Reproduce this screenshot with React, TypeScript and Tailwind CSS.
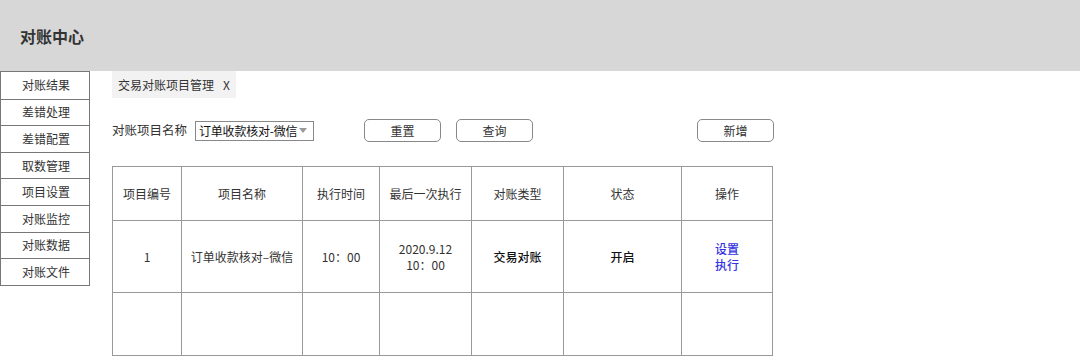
import React from "react";

const font = { fontFamily: '"Noto Sans CJK SC", "Noto Sans", sans-serif' };

const sideItems = ["对账结果", "差错处理", "差错配置", "取数管理", "项目设置", "对账监控", "对账数据", "对账文件"];

const cols = [69, 121, 77, 92, 92, 118, 91];

export default function App() {
  return (
    <div className="w-[1080px] h-[356px] bg-white overflow-hidden text-[#333]" style={font}>
      <div className="h-[71px] bg-[#d7d7d7] flex items-center pl-[20px]">
        <span className="text-[16px] font-bold text-[#333] tracking-[0px]">对账中心</span>
      </div>
      <div className="flex">
        <div className="w-[90px] border border-[#777] self-start">
          {sideItems.map((t, i) => (
            <div
              key={t}
              className={`h-[26.6px] flex items-center pl-[21px] text-[12px] text-[#333] ${i > 0 ? "border-t border-[#777]" : ""}`}
            >
              {t}
            </div>
          ))}
        </div>
        <div className="ml-[22px] flex flex-col">
          <div className="flex">
            <div className="h-[27px] bg-[#f2f2f2] flex items-center pl-[6px] pr-[6px] text-[12px] text-[#333]">
              <span>交易对账项目管理</span>
              <span className="ml-[9px]">X</span>
            </div>
          </div>
          <div className="flex items-center mt-[21px] h-[23px]">
            <span className="text-[12.5px] text-[#333] whitespace-nowrap">对账项目名称</span>
            <div className="ml-[8px] w-[119px] h-[20px] border border-[#888] flex items-center pl-[3px] pr-[6px] justify-between shrink-0">
              <span className="text-[12px] text-[#111] whitespace-nowrap tracking-[-0.2px]">订单收款核对-微信</span>
              <svg width="8" height="5" viewBox="0 0 8 5" className="shrink-0">
                <path d="M0 0 L8 0 L4 5 Z" fill="#999" />
              </svg>
            </div>
            <button className="ml-[50px] w-[77px] h-[23px] border border-[#888] rounded-[5px] text-[12px] text-[#333] flex items-center justify-center">
              重置
            </button>
            <button className="ml-[15px] w-[77px] h-[23px] border border-[#888] rounded-[5px] text-[12px] text-[#333] flex items-center justify-center">
              查询
            </button>
            <button className="ml-[164px] w-[77px] h-[23px] border border-[#888] rounded-[5px] text-[12px] text-[#333] flex items-center justify-center">
              新增
            </button>
          </div>
          <table className="mt-[24px] border-collapse text-[12px] text-[#333]" style={{ width: 661 }}>
            <colgroup>
              {cols.map((w, i) => (
                <col key={i} style={{ width: w }} />
              ))}
            </colgroup>
            <tbody>
              <tr className="h-[54px]">
                {["项目编号", "项目名称", "执行时间", "最后一次执行", "对账类型", "状态", "操作"].map((t) => (
                  <td key={t} className="border border-[#999] text-center align-middle p-0">
                    {t}
                  </td>
                ))}
              </tr>
              <tr className="h-[72px]">
                <td className="border border-[#999] text-center p-0">1</td>
                <td className="border border-[#999] text-center p-0">订单收款核对–微信</td>
                <td className="border border-[#999] text-center p-0">10：00</td>
                <td className="border border-[#999] text-center p-0 leading-[16px]">
                  2020.9.12
                  <br />
                  10：00
                </td>
                <td className="border border-[#999] text-center p-0 font-medium text-[#111]">交易对账</td>
                <td className="border border-[#999] text-center p-0 font-medium text-[#111]">开启</td>
                <td className="border border-[#999] text-center p-0 font-medium text-[#3434e0] leading-[16px]">
                  设置
                  <br />
                  执行
                </td>
              </tr>
              <tr className="h-[63px]">
                {cols.map((_, i) => (
                  <td key={i} className="border border-[#999] p-0"></td>
                ))}
              </tr>
            </tbody>
          </table>
        </div>
      </div>
    </div>
  );
}
